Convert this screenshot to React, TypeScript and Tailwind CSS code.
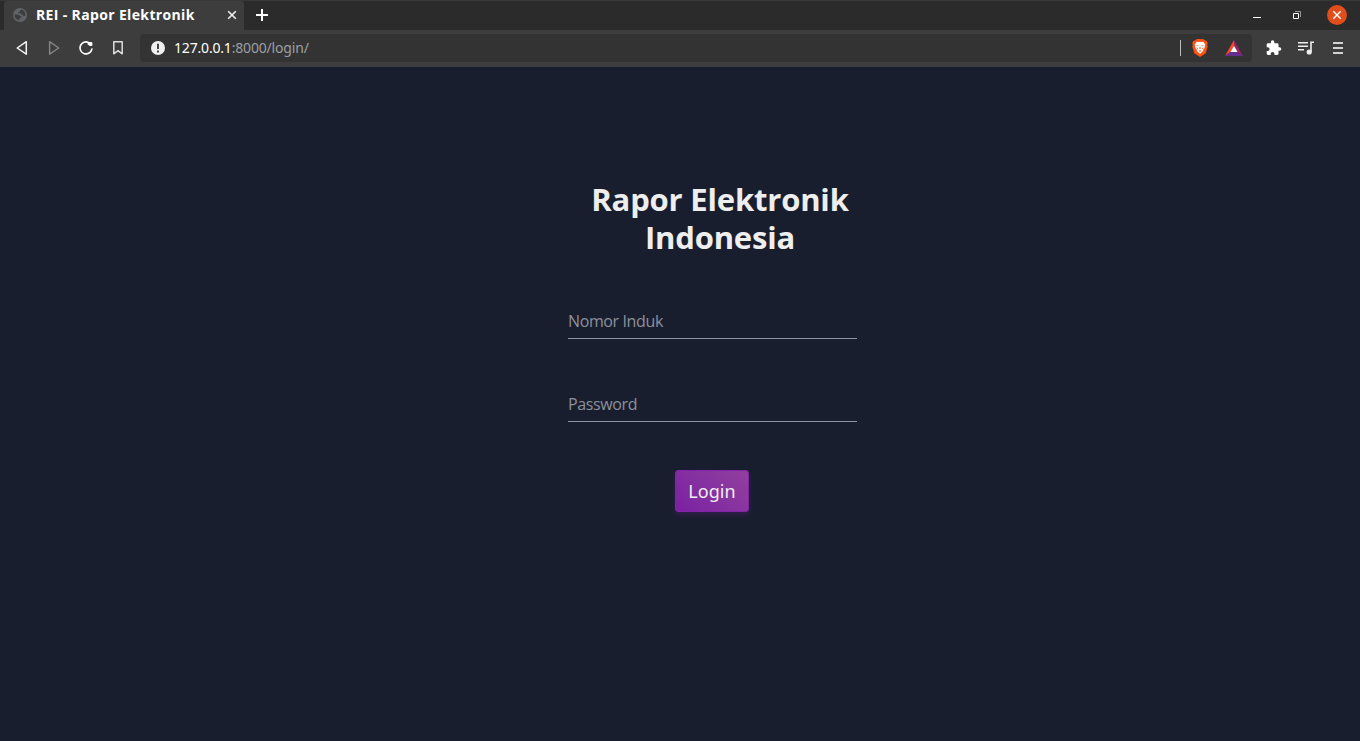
import React from "react";

function TabStrip() {
  return (
    <div className="flex h-[30px] bg-[#2b2b2b] border-t border-[#383838]">
      <div className="ml-1 flex h-[29px] w-60 items-center rounded-t-[4px] bg-[#3d3d3d] pb-[2px] pl-[9px] pr-[7px]">
        <svg width="14" height="14" viewBox="0 0 14 14" className="mt-px shrink-0">
          <circle cx="7" cy="7" r="7" fill="#606468" />
          <path d="M1.5 6.6h3.7q1.6.2 1.7 1.5h1.4v1.6H6.6v1.6l-.8.9A5.6 5.6 0 0 1 1.5 6.6ZM8.4 1.6 7 2.5v1.3H5.4v1.4h2.2l1 1.5h1.6v1.2h2A5.6 5.6 0 0 0 8.4 1.6Z" fill="#3d3d3d" />
        </svg>
        <span className="ml-[9px] w-[180px] whitespace-nowrap text-[14px] font-bold leading-[20px] tracking-[0.35px] text-white">
          REI - Rapor Elektronik
        </span>
        <svg width="10" height="10" viewBox="0 0 10 10" className="ml-auto shrink-0" stroke="#f2f2f2" strokeWidth="1.6">
          <path d="m1.2 1.2 7.6 7.6m0-7.6L1.2 8.8" />
        </svg>
      </div>
      <svg width="12" height="12" viewBox="0 0 12 12" className="ml-3 mt-2" stroke="#fff" strokeWidth="2">
        <path d="M6 0v12M0 6h12" />
      </svg>
      <div className="ml-auto flex">
        <svg width="8" height="1" className="mt-4"><path d="M0 .5h8" stroke="#fff" /></svg>
        <svg width="8" height="8" viewBox="0 0 8 8" className="ml-8 mt-[10px]" fill="none">
          <path d="M2 .5h5.5V6" stroke="#999" />
          <path d="M.5 2.5h5v5h-5z" stroke="#fff" />
        </svg>
        <svg width="20" height="20" viewBox="0 0 20 20" className="ml-[26px] mr-[13px] mt-1">
          <circle cx="10" cy="10" r="10" fill="#e04e1b" />
          <path d="m6.3 6.3 7.4 7.4m0-7.4-7.4 7.4" stroke="#fff" strokeWidth="1.4" />
        </svg>
      </div>
    </div>
  );
}

function BraveIcon() {
  return (
    <svg width="16" height="18" viewBox="0 0 16 18">
      <path d="M4.8 0h6.4l1.5 1.6 1.5-.2L15.8 4l-.6 1.7.5 1.7-2 6.8L8 18l-5.7-3.8-2-6.8.5-1.7L.2 4l1.6-2.6 1.5.2Z" fill="#fb5412" />
      <path d="m4.8 2.8 1.5.3L8 2.7l1.7.4 1.5-.3 2.1 2.7-.5 1.4-.2 2-1.7 2.1.3.9L8 14.7 4.8 11.9l.3-.9-1.7-2.1-.2-2-.5-1.4Z" fill="#fff" />
      <path d="m4.2 5.9 2.4.4-.5 1-1.5-.5Zm7.6 0-2.4.4.5 1 1.5-.5ZM4.6 8.2l1.6 1.2-.4 1-1.4-1.3Zm6.8 0L9.8 9.4l.4 1 1.4-1.3ZM7.4 8h1.2l.3 1.6-.9.5-.9-.5ZM8 11l1.7.8-1.7 1.3-1.7-1.3Z" fill="#ef7a50" />
    </svg>
  );
}

function AddressBar() {
  return (
    <div className="flex h-[37px] items-center bg-[#3d3d3d] pb-px pl-[15px]">
      <svg width="14" height="16" viewBox="0 0 14 16" fill="none" stroke="#f4f4f4" strokeWidth="1.5" strokeLinejoin="round">
        <path d="M11.3 1.7 2.2 8l9.1 6.2Z" />
      </svg>
      <svg width="14" height="16" viewBox="0 0 14 16" className="ml-[18px]" fill="none" stroke="#858585" strokeWidth="1.4" strokeLinejoin="round">
        <path d="m2.6 1.7 9.1 6.3-9.1 6.2Z" />
      </svg>
      <svg width="16" height="16" viewBox="0 0 16 16" className="ml-[17px]" fill="none">
        <path d="M10.8 2.6A6 6 0 1 0 13.9 9" stroke="#fff" strokeWidth="1.6" strokeLinecap="round" />
        <path d="M9.6 4.5V2.7q0-.8.8-.8h2.8q1.2 0 1.2 1.2v2q0 .9-.9.9h-1.6Z" fill="#fff" />
      </svg>
      <svg width="12" height="16" viewBox="0 0 12 16" className="ml-[18px]" fill="none" stroke="#ddd" strokeWidth="1.5" strokeLinejoin="round">
        <path d="M1.8 1.8h8.4v12L6 10.7l-4.2 3.1Z" />
      </svg>
      <div className="ml-4 flex h-7 w-[1112px] items-center rounded-[4px] bg-[#333333] pl-[11px] pr-[9px]">
        <svg width="14" height="14" viewBox="0 0 14 14">
          <circle cx="7" cy="7" r="7" fill="#f0f0f0" />
          <path d="M7 2.7v5.2M7 9.6v1.8" stroke="#333" strokeWidth="1.8" />
        </svg>
        <span className="ml-[9px] whitespace-nowrap pb-px font-['Noto_Sans',sans-serif] text-[14px] leading-5 tracking-[-0.18px] text-[#9b9fa3]">
          <span className="text-white">127.0.0.1</span>:8000/login/
        </span>
        <div className="ml-auto mr-[11px] h-4 w-px bg-[#bcbcbc]" />
        <BraveIcon />
        <svg width="18" height="16" viewBox="0 0 18 16" className="ml-[17px]">
          <path d="M9 0v5.8L5.4 12 0 16Z" fill="#ff4724" />
          <path d="m9 0 9 16-5.4-4L9 5.8Z" fill="#9e1f63" />
          <path d="m0 16 5.4-4h7.2l5.4 4Z" fill="#662d91" />
          <path d="m9 5.8 3.6 6.2H5.4Z" fill="#fff" />
        </svg>
      </div>
      <svg width="16" height="16" viewBox="1 1 23 22" className="ml-[14px]" fill="#fff">
        <path d="M20.5 11H19V7a2 2 0 0 0-2-2h-4V3.5a2.5 2.5 0 0 0-5 0V5H4a2 2 0 0 0-2 2v3.8h1.5a2.7 2.7 0 0 1 0 5.4H2V20a2 2 0 0 0 2 2h3.8v-1.5a2.7 2.7 0 0 1 5.4 0V22H17a2 2 0 0 0 2-2v-4h1.5a2.5 2.5 0 0 0 0-5Z" />
      </svg>
      <svg width="16" height="14" viewBox="0 0 16 14" className="ml-[16px]" fill="none" stroke="#eee" strokeWidth="1.6">
        <path d="M0 1.8h10M0 5.3h10M0 8.8h6M13 11V1.3h3" />
        <circle cx="11.2" cy="11" r="1.8" fill="#eee" />
      </svg>
      <svg width="10" height="12" viewBox="0 0 10 12" className="ml-[19px]" stroke="#d2d2d2" strokeWidth="2">
        <path d="M0 1h10M0 6h10M0 11h10" />
      </svg>
    </div>
  );
}

function Field({ label, type }: { label: string; type: string }) {
  return (
    <input
      type={type}
      placeholder={label}
      className="block h-9 w-[289px] border-b border-[#8f94a2] bg-transparent pb-0 text-[16px] tracking-[-0.38px] text-[#eeeeee] outline-none placeholder:text-[#8c919b]"
    />
  );
}

export default function App() {
  return (
    <div className="flex h-[741px] w-[1360px] flex-col overflow-hidden bg-[#191e2f] font-['Open_Sans','Noto_Sans',sans-serif]">
      <TabStrip />
      <AddressBar />
      <main className="flex flex-1 flex-col pl-[568px]">
        <h1 className="mt-[113px] w-[304px] text-center text-[31px] font-bold leading-[38px] tracking-[-0.18px] text-[#eeeeee]">
          Rapor Elektronik
          <br />
          Indonesia
        </h1>
        <form className="mt-[47px] flex w-[289px] flex-col" onSubmit={(e) => e.preventDefault()}>
          <Field label="Nomor Induk" type="text" />
          <div className="h-[47px]" />
          <Field label="Password" type="password" />
          <button className="ml-[107px] mt-12 h-[42px] w-[74px] rounded-[3px] border border-[#8423a8] bg-linear-45 from-[#7b1fa2] to-[#913f9e] font-['Noto_Sans',sans-serif] text-[18px] leading-6 tracking-[0.1px] text-[#eeeeee] shadow-[0_3px_5px_rgba(123,31,162,0.25)]">
            Login
          </button>
        </form>
      </main>
    </div>
  );
}
